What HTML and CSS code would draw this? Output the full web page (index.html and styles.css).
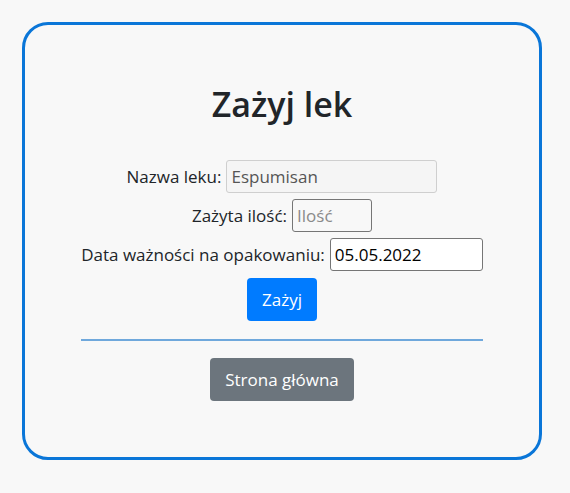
FILE: index.html
```html
<!DOCTYPE html>
<html lang="pl">
<head>
<meta charset="utf-8">
<title>Zażyj lek</title>
<link rel="stylesheet" href="styles.css">
</head>
<body>
<div class="page">
  <main class="card">
    <h1 class="title">Zażyj lek</h1>
    <form class="form">
      <div class="row">
        <label class="label" for="name">Nazwa leku:</label>
        <input class="input input-disabled" id="name" type="text" value="Espumisan" disabled>
      </div>
      <div class="row">
        <label class="label" for="qty">Zażyta ilość:</label>
        <input class="input input-qty" id="qty" type="text" placeholder="Ilość">
      </div>
      <div class="row">
        <label class="label" for="date">Data ważności na opakowaniu:</label>
        <input class="input input-date" id="date" type="text" value="05.05.2022">
      </div>
      <button class="btn btn-primary" type="button">Zażyj</button>
    </form>
    <hr class="divider">
    <button class="btn btn-secondary" type="button">Strona główna</button>
  </main>
</div>
</body>
</html>
```
FILE: styles.css
```css
* { box-sizing: border-box; }
html, body { margin: 0; padding: 0; }
body {
  background: #f8f8f8;
  font-family: "Open Sans", "Noto Sans", sans-serif;
  color: #212529;
  font-size: 17px;
}
.page {
  padding: 22px 28px 0 22px;
}
.card {
  width: 520px;
  height: 438px;
  border: 3px solid #0a76d8;
  border-radius: 26px;
  display: flex;
  flex-direction: column;
  align-items: center;
  padding: 0 56px;
}
.title {
  margin: 58px 0 0;
  font-size: 34px;
  font-weight: 600;
  line-height: 43px;
  color: #212529;
}
.form {
  margin-top: 34px;
  display: flex;
  flex-direction: column;
  align-items: center;
  gap: 6px;
}
.row {
  display: flex;
  align-items: center;
  gap: 5px;
  height: 33px;
  white-space: nowrap;
}
.label {
  font-size: 17px;
  color: #212529;
  flex-shrink: 0;
}
.input {
  flex-shrink: 0;
  height: 33px;
  font-family: inherit;
  font-size: 17px;
  padding: 0 4px;
  border: 1px solid #767676;
  border-radius: 3px;
  color: #000;
  background: transparent;
}
.input-disabled {
  width: 211px;
  background: #f5f5f5;
  border-color: #cfcfcf;
  color: #555;
}
.input-qty { width: 80px; }
.input-qty::placeholder { color: #8a8a8a; }
.input-date { width: 153px; background: #fff; }
.btn {
  font-family: inherit;
  font-size: 17px;
  height: 43px;
  border: none;
  border-radius: 4px;
  color: #fff;
  padding: 0 15px;
  cursor: pointer;
}
.btn-primary { background: #007bff; margin-top: 1px; }
.btn-secondary { background: #6c757d; }
.divider {
  width: 100%;
  border: none;
  height: 2px;
  background: #6fa8dc;
  margin: 18px 0 17px;
}
```
